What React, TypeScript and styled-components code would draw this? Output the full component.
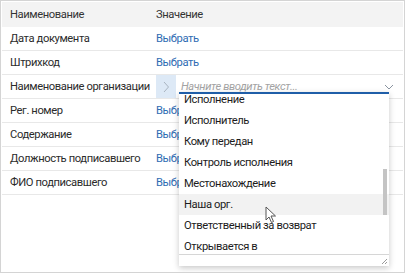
import { Fragment, useEffect, useRef } from "react";
import styled, { createGlobalStyle } from "styled-components";

const GlobalStyle = createGlobalStyle`
  body {
    margin: 0;
    background: #fff;
    font-family: Roboto, "Noto Sans", sans-serif;
    font-size: 11.2px;
    letter-spacing: -0.4px;
    color: #2b2b2b;
  }
`;

const Frame = styled.div`
  position: relative;
  box-sizing: border-box;
  width: 405px;
  height: 273px;
  border: 1px solid #d4d4d4;
  padding: 1px;
  overflow: hidden;
`;

const Grid = styled.div`
  display: grid;
  grid-template-columns: 154px 1fr;
`;

const HeadCell = styled.div<{ $first?: boolean }>`
  height: 25px;
  display: flex;
  align-items: center;
  background: #f3f3f3;
  padding-left: ${(p) => (p.$first ? "8px" : "0")};
  color: #333;
`;

const Cell = styled.div<{ $first?: boolean }>`
  position: relative;
  height: 23px;
  display: flex;
  align-items: center;
  padding-left: ${(p) => (p.$first ? "8px" : "0")};
  border-bottom: 1px solid #e8e8e8;
  white-space: nowrap;
`;

const Link = styled.span`
  color: #2f6cb3;
`;

const Picker = styled.div`
  display: flex;
  align-items: center;
  width: 100%;
  height: 100%;
`;

const ExpandButton = styled.div`
  width: 20px;
  height: 100%;
  display: flex;
  align-items: center;
  justify-content: center;
  background: #dde9f6;
`;

const Placeholder = styled.span`
  flex: 1;
  padding-left: 5px;
  font-style: italic;
  color: #a3a3a3;
`;

const Caret = styled.div`
  width: 20px;
  display: flex;
  align-items: center;
  justify-content: center;
  margin-right: 4px;
`;

const Dropdown = styled.div`
  position: absolute;
  z-index: 2;
  top: 17px;
  left: 23px;
  width: 210px;
  height: 174px;
  box-sizing: border-box;
  border-top: 2px solid #1f5ea8;
  background: #fff;
  box-shadow: 0 2px 6px rgba(0, 0, 0, 0.22);
  display: flex;
  flex-direction: column;
`;

const Viewport = styled.div`
  position: relative;
  flex: 1;
  overflow-y: scroll;
  scrollbar-width: none;
  &::-webkit-scrollbar {
    display: none;
  }
`;

const Item = styled.div<{ $hover?: boolean }>`
  height: 21px;
  line-height: 21px;
  padding-left: 5px;
  color: #1c1c1c;
  white-space: nowrap;
  background: ${(p) => (p.$hover ? "#f2f2f2" : "transparent")};
`;

const Thumb = styled.div`
  position: absolute;
  right: 2px;
  top: 75px;
  width: 4px;
  height: 46px;
  background: #c4c4c4;
`;

const Footer = styled.div`
  height: 10px;
  border-top: 1px solid #d6d6d6;
  display: flex;
  justify-content: flex-end;
  align-items: flex-end;
  padding: 0 1px 1px 0;
`;

const Pointer = styled.svg`
  position: absolute;
  z-index: 3;
  left: 264px;
  top: 205px;
`;

const rows = [
  "Дата документа",
  "Штрихкод",
  "Наименование организации",
  "Рег. номер",
  "Содержание",
  "Должность подписавшего",
  "ФИО подписавшего",
];

const fields = [
  "Автор",
  "Адресат",
  "Вид документа",
  "Вложения",
  "Гриф доступа",
  "Дата документа",
  "Дата регистрации",
  "Дело",
  "Должность подписавшего",
  "Заголовок",
  "Идентификатор",
  "Индекс",
  "Исполнение",
  "Исполнитель",
  "Кому передан",
  "Контроль исполнения",
  "Местонахождение",
  "Наша орг.",
  "Ответственный за возврат",
  "Открывается в",
  "Подписал",
  "Получатель",
  "Рег. номер",
  "Содержание",
  "Срок исполнения",
  "Штрихкод",
];

function FieldList() {
  let ref = useRef<HTMLDivElement>(null);
  useEffect(() => {
    if (ref.current) ref.current.scrollTop = 257;
  }, []);
  return (
    <Dropdown>
      <Viewport ref={ref}>
        {fields.map((f) => (
          <Item key={f} $hover={f === "Наша орг."}>
            {f}
          </Item>
        ))}
      </Viewport>
      <Thumb />
      <Footer>
        <svg width="7" height="7" viewBox="0 0 7 7">
          <path d="M6 1 L1 6 M6 4 L4 6" stroke="#9a9a9a" strokeWidth="1" />
        </svg>
      </Footer>
    </Dropdown>
  );
}

export default function App() {
  return (
    <>
      <GlobalStyle />
      <Frame>
        <Grid>
          <HeadCell $first>Наименование</HeadCell>
          <HeadCell>Значение</HeadCell>
          {rows.map((name) => (
            <Fragment key={name}>
              <Cell $first>{name}</Cell>
              <Cell>
                {name === "Наименование организации" ? (
                  <>
                    <Picker>
                      <ExpandButton>
                        <svg width="8" height="12" viewBox="0 0 8 12">
                          <path d="M2 1 L6.5 6 L2 11" fill="none" stroke="#a9b4c0" strokeWidth="1" />
                        </svg>
                      </ExpandButton>
                      <Placeholder>Начните вводить текст...</Placeholder>
                      <Caret>
                        <svg width="10" height="6" viewBox="0 0 10 6">
                          <path d="M1 1 L5 5 L9 1" fill="none" stroke="#8a94a0" strokeWidth="1" />
                        </svg>
                      </Caret>
                    </Picker>
                    <FieldList />
                  </>
                ) : (
                  <Link>Выбрать</Link>
                )}
              </Cell>
            </Fragment>
          ))}
        </Grid>
        <Pointer width="12" height="18" viewBox="0 0 12 18">
          <path
            d="M1 1 L1 14 L4 11 L6.5 16.5 L8.5 15.5 L6 10 L10.5 10 Z"
            fill="#fff"
            stroke="#555"
            strokeWidth="1"
            strokeLinejoin="round"
          />
        </Pointer>
      </Frame>
    </>
  );
}
